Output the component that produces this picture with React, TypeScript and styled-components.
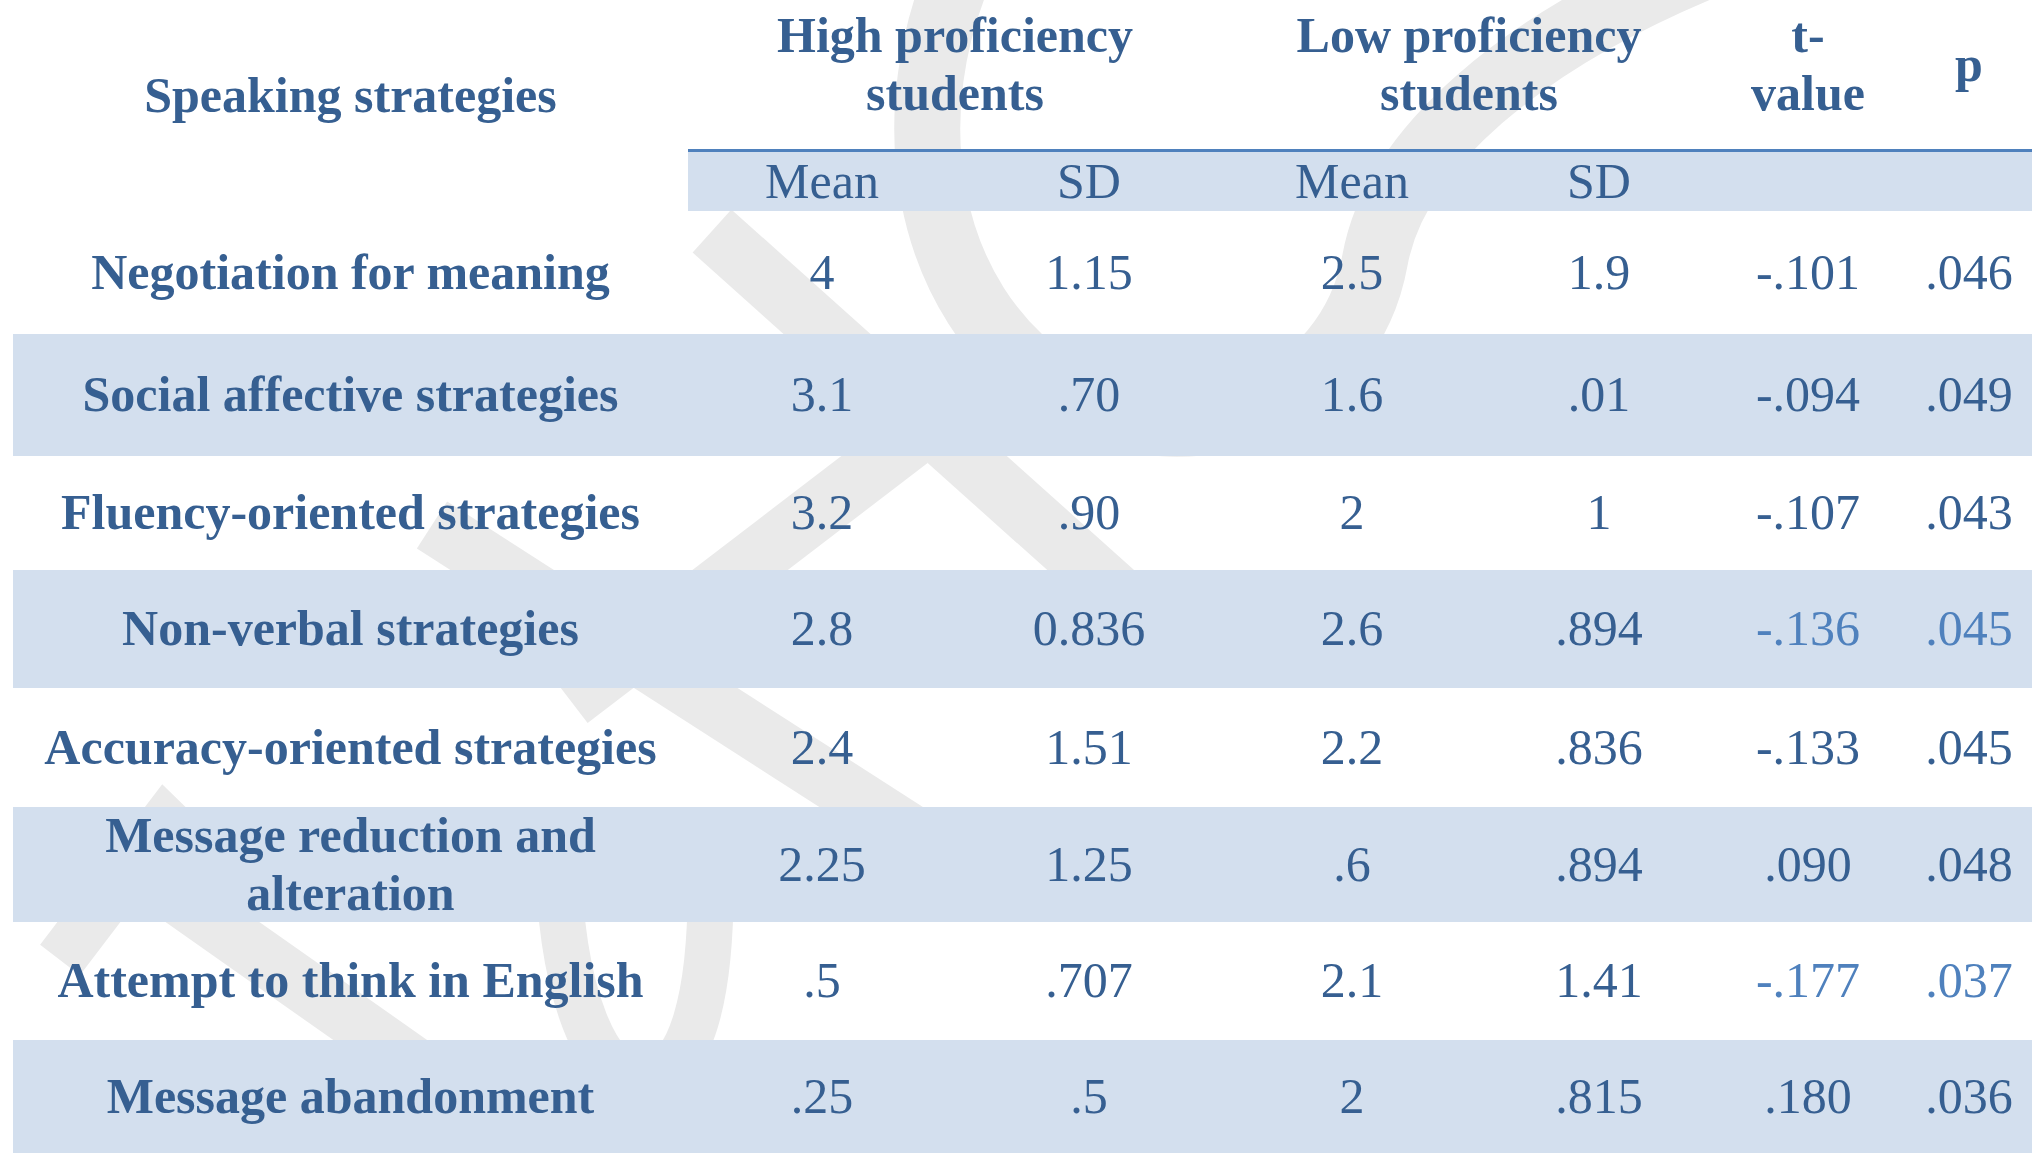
import React from "react";
import styled, { createGlobalStyle } from "styled-components";

const GlobalStyle = createGlobalStyle`
  html, body {
    margin: 0;
    padding: 0;
    background: #ffffff;
  }
  body {
    overflow: hidden;
  }
`;

const Page = styled.div`
  position: relative;
  width: 2032px;
  height: 1153px;
  overflow: hidden;
  background: #ffffff;
  padding-left: 13px;
  box-sizing: border-box;
`;

const Watermark = styled.svg`
  position: absolute;
  left: 0;
  top: 0;
  width: 2032px;
  height: 1153px;
  z-index: 0;
  pointer-events: none;
`;

const Table = styled.table`
  position: relative;
  z-index: 1;
  width: 2025px;
  table-layout: fixed;
  border-collapse: separate;
  border-spacing: 0;
  font-family: "Liberation Serif", "Times New Roman", serif;
  color: #365f91;
`;

const Row = styled.tr<{ $h: number; $band?: boolean }>`
  height: ${(p) => p.$h}px;
  background: ${(p) => (p.$band ? "#d3dfee" : "transparent")};
`;

const HeadCell = styled.th`
  font-size: 50px;
  font-weight: 700;
  line-height: 57.5px;
  text-align: center;
  vertical-align: middle;
  padding: 0 0 20px;
`;

const SubHeadCell = styled.td`
  background: #d3dfee;
  border-top: 3px solid #4f81bd;
  font-size: 50px;
  font-weight: 400;
  line-height: 57.5px;
  text-align: center;
  vertical-align: middle;
  padding: 0;
`;

const NameCell = styled.th`
  font-size: 50px;
  font-weight: 700;
  line-height: 57.5px;
  text-align: center;
  vertical-align: middle;
  padding: 0 20px;
`;

const ValueCell = styled.td<{ $soft?: boolean }>`
  font-size: 50px;
  font-weight: 400;
  line-height: 57.5px;
  text-align: center;
  vertical-align: middle;
  padding: 0;
  color: ${(p) => (p.$soft ? "#4f81bd" : "#365f91")};
`;

type DataRow = {
  name: string;
  h: number;
  band?: boolean;
  values: string[];
  soft?: number[];
};

const rows: DataRow[] = [
  { name: "Negotiation for meaning", h: 123, values: ["4", "1.15", "2.5", "1.9", "-.101", ".046"] },
  { name: "Social affective strategies", h: 122, band: true, values: ["3.1", ".70", "1.6", ".01", "-.094", ".049"] },
  { name: "Fluency-oriented strategies", h: 114, values: ["3.2", ".90", "2", "1", "-.107", ".043"] },
  { name: "Non-verbal strategies", h: 118, band: true, values: ["2.8", "0.836", "2.6", ".894", "-.136", ".045"], soft: [4, 5] },
  { name: "Accuracy-oriented strategies", h: 119, values: ["2.4", "1.51", "2.2", ".836", "-.133", ".045"] },
  { name: "Message reduction and alteration", h: 115, band: true, values: ["2.25", "1.25", ".6", ".894", ".090", ".048"] },
  { name: "Attempt to think in English", h: 118, values: [".5", ".707", "2.1", "1.41", "-.177", ".037"], soft: [4, 5] },
  { name: "Message abandonment", h: 113, band: true, values: [".25", ".5", "2", ".815", ".180", ".036"] },
];

const colWidths = [675, 268, 266, 260, 234, 184, 138];

function WatermarkArt() {
  return (
    <Watermark viewBox="0 0 2032 1153">
      <g fill="none" stroke="#eaeaea" strokeLinecap="butt" strokeLinejoin="miter">
        <path
          d="M 965 -40 C 895 110 920 300 1060 390 C 1190 470 1350 400 1375 260 C 1395 150 1520 40 1720 -40"
          strokeWidth={66}
        />
        <line x1={712} y1={231} x2={1180} y2={650} strokeWidth={58} />
        <line x1={910} y1={440} x2={570} y2={700} strokeWidth={58} />
        <line x1={432} y1={525} x2={935} y2={848} strokeWidth={56} />
        <path d="M 60 960 L 165 822 L 245 900" strokeWidth={50} />
        <line x1={110} y1={850} x2={430} y2={1075} strokeWidth={54} />
        <path d="M 558 850 C 560 1000 600 1080 640 1080 C 690 1080 715 1000 710 850" strokeWidth={46} />
      </g>
    </Watermark>
  );
}

export default function App() {
  return (
    <Page>
      <GlobalStyle />
      <WatermarkArt />
      <Table>
        <colgroup>
          {colWidths.map((w, i) => (
            <col key={i} style={{ width: w }} />
          ))}
        </colgroup>
        <thead>
          <Row $h={149}>
            <HeadCell rowSpan={2}>Speaking strategies</HeadCell>
            <HeadCell colSpan={2}>High proficiency students</HeadCell>
            <HeadCell colSpan={2}>Low proficiency students</HeadCell>
            <HeadCell>
              t-
              <br />
              value
            </HeadCell>
            <HeadCell>p</HeadCell>
          </Row>
          <Row $h={62}>
            <SubHeadCell>Mean</SubHeadCell>
            <SubHeadCell>SD</SubHeadCell>
            <SubHeadCell>Mean</SubHeadCell>
            <SubHeadCell>SD</SubHeadCell>
            <SubHeadCell />
            <SubHeadCell />
          </Row>
        </thead>
        <tbody>
          {rows.map((r) => (
            <Row key={r.name} $h={r.h} $band={r.band}>
              <NameCell>{r.name}</NameCell>
              {r.values.map((v, i) => (
                <ValueCell key={i} $soft={r.soft?.includes(i)}>
                  {v}
                </ValueCell>
              ))}
            </Row>
          ))}
        </tbody>
      </Table>
    </Page>
  );
}
